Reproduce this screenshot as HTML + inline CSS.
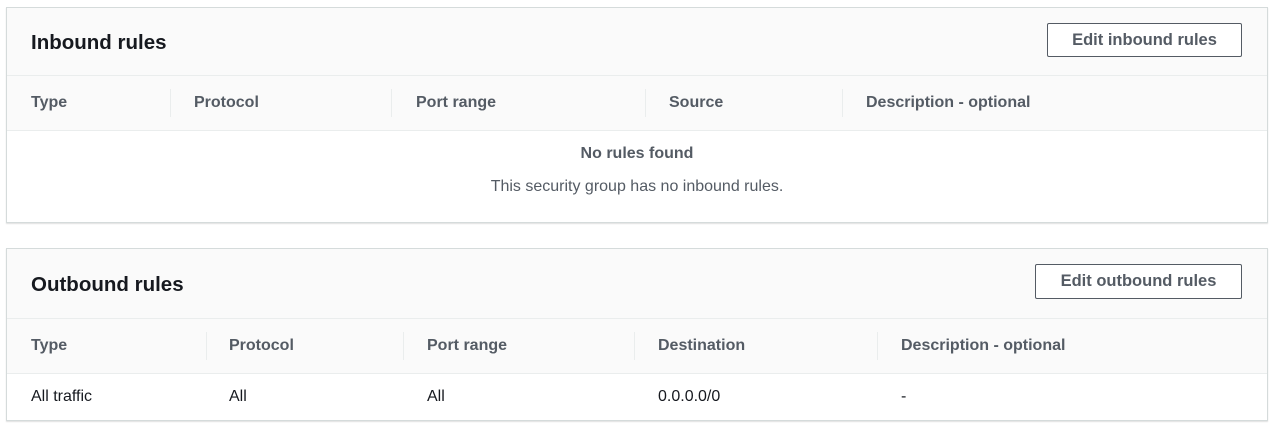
<!DOCTYPE html>
<html><head><style>
*{margin:0;padding:0;box-sizing:border-box}
body{width:1276px;height:428px;background:#fff;font-family:"Liberation Sans",sans-serif;position:relative;overflow:hidden}
.p{position:absolute;left:6px;width:1262px;border:1px solid #d5dbdb;box-shadow:0 1px 1px rgba(0,0,0,.12)}
.hd{background:#fafafa;position:relative;border-bottom:1px solid #eaeded}
.hd h2{position:absolute;left:24px;font-size:20.5px;font-weight:bold;color:#16191f}
.btn{position:absolute;right:25px;border:1px solid #545b64;background:#fff;color:#545b64;font-weight:bold;font-size:16.5px;display:flex;align-items:center;justify-content:center;border-radius:2px}
.th{background:#fafafa;position:relative;border-bottom:1px solid #eaeded}
.th span,.row span{position:absolute;font-size:16px;top:50%;transform:translateY(-50%)}
.th span{font-weight:bold;color:#545b64}
.row span{color:#16191f}
.dv{position:absolute;top:13px;bottom:13px;width:1px;background:#eaeded}
</style></head><body>
<div class="p" style="top:7px;height:216px">
 <div class="hd" style="height:68px"><h2 style="top:23px">Inbound rules</h2>
  <div class="btn" style="top:15px;width:195px;height:34px">Edit inbound rules</div></div>
 <div class="th" style="height:55px">
  <span style="left:24px">Type</span><div class="dv" style="left:163px"></div>
  <span style="left:187px">Protocol</span><div class="dv" style="left:384px"></div>
  <span style="left:409px">Port range</span><div class="dv" style="left:638px"></div>
  <span style="left:662px">Source</span><div class="dv" style="left:835px"></div>
  <span style="left:859px">Description - optional</span>
 </div>
 <div style="text-align:center;color:#545b64;font-size:16px">
  <div style="font-weight:bold;margin-top:14px">No rules found</div>
  <div style="margin-top:15px">This security group has no inbound rules.</div>
 </div>
</div>
<div class="p" style="top:248px;height:173px">
 <div class="hd" style="height:70px"><h2 style="top:24px">Outbound rules</h2>
  <div class="btn" style="top:15px;width:207px;height:35px">Edit outbound rules</div></div>
 <div class="th" style="height:55px">
  <span style="left:24px">Type</span><div class="dv" style="left:199px"></div>
  <span style="left:222px">Protocol</span><div class="dv" style="left:396px"></div>
  <span style="left:420px">Port range</span><div class="dv" style="left:627px"></div>
  <span style="left:651px">Destination</span><div class="dv" style="left:870px"></div>
  <span style="left:894px">Description - optional</span>
 </div>
 <div class="row" style="position:relative;height:46px">
  <span style="left:24px">All traffic</span>
  <span style="left:222px">All</span>
  <span style="left:420px">All</span>
  <span style="left:651px">0.0.0.0/0</span>
  <span style="left:894px">-</span>
 </div>
</div>
</body></html>
